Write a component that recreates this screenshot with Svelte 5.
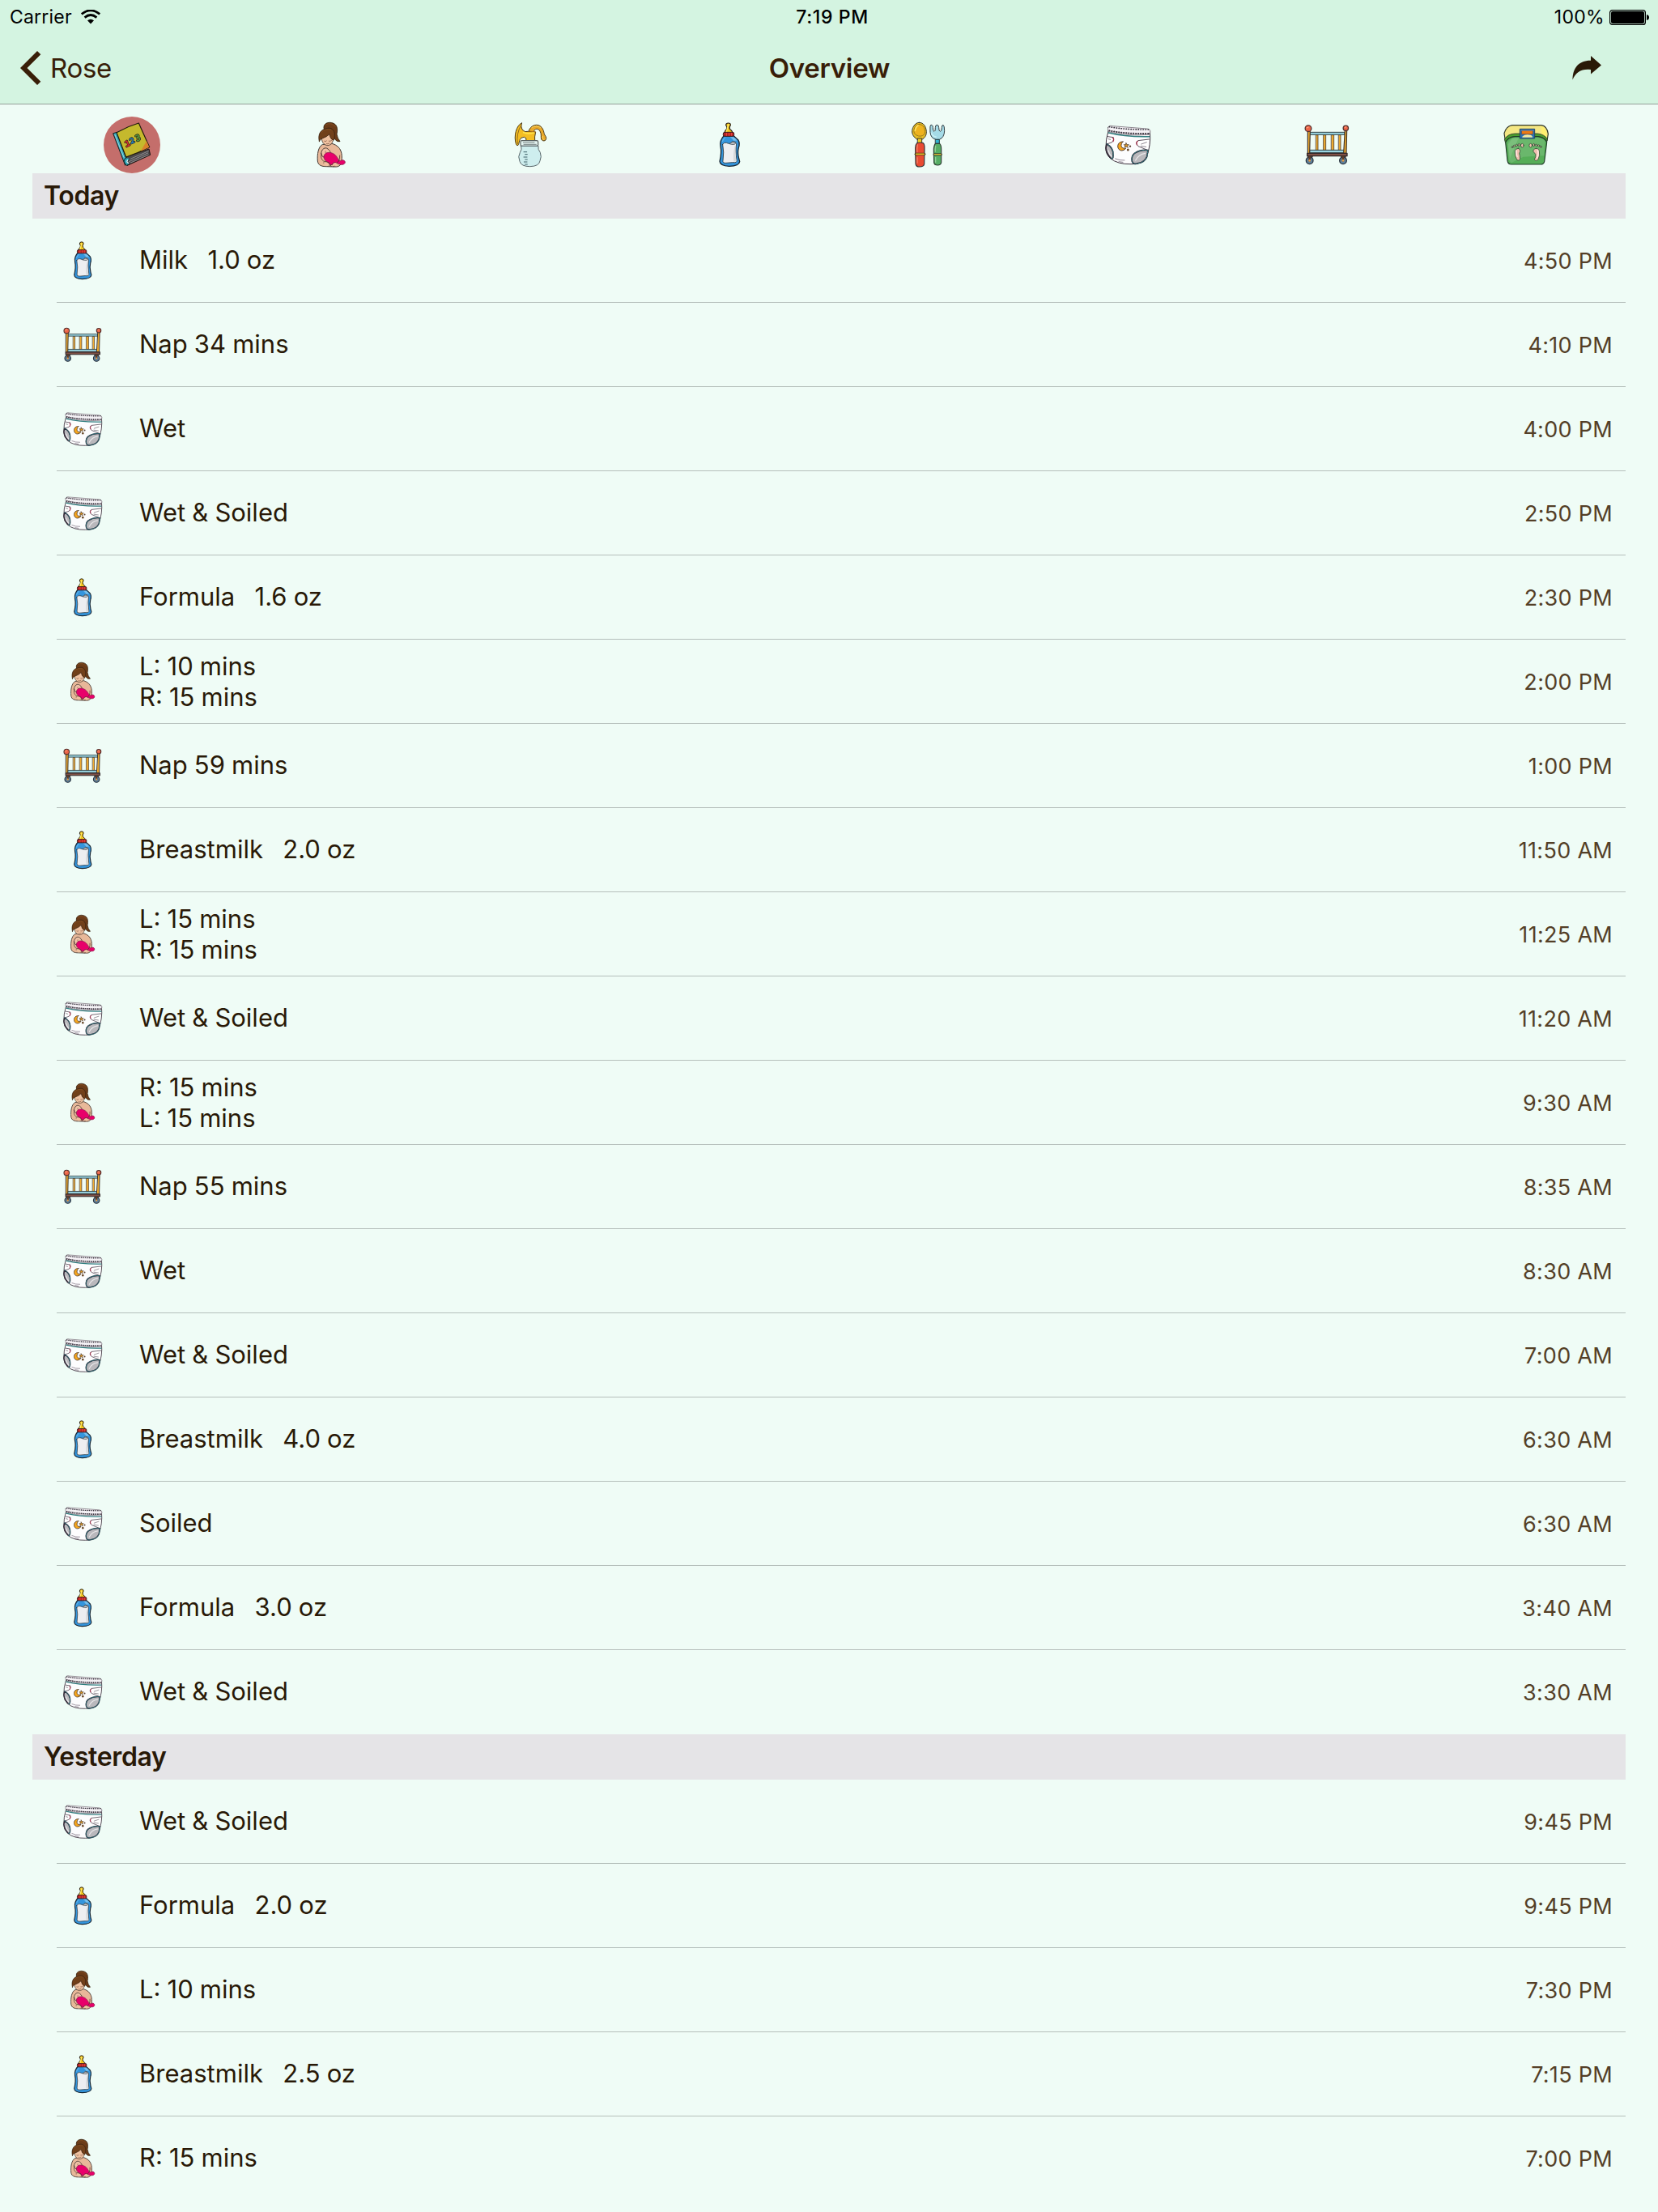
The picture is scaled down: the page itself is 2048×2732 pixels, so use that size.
<script lang="ts">
  type Kind = "log" | "nursing" | "pump" | "bottle" | "food" | "diaper" | "crib" | "bag";
  type Entry = { kind: Kind; text: string; time: string };

  const tabs: Kind[] = ["log", "nursing", "pump", "bottle", "food", "diaper", "crib", "bag"];
  let selected: Kind = $state("log");

  // each icon is drawn in its own 210 unit square
  const boxes: Record<Kind, string> = {
    log: "24 18 210 210",
    nursing: "12 18 210 210",
    pump: "15 18 210 210",
    bottle: "18 18 210 210",
    food: "6 18 210 210",
    diaper: "24 18 210 210",
    crib: "12 18 210 210",
    bag: "15 18 210 210"
  };

  const days: { title: string; entries: Entry[] }[] = [
    {
      title: "Today",
      entries: [
        { kind: "bottle", text: "Milk   1.0 oz", time: "4:50 PM" },
        { kind: "crib", text: "Nap 34 mins", time: "4:10 PM" },
        { kind: "diaper", text: "Wet", time: "4:00 PM" },
        { kind: "diaper", text: "Wet & Soiled", time: "2:50 PM" },
        { kind: "bottle", text: "Formula   1.6 oz", time: "2:30 PM" },
        { kind: "nursing", text: "L: 10 mins\nR: 15 mins", time: "2:00 PM" },
        { kind: "crib", text: "Nap 59 mins", time: "1:00 PM" },
        { kind: "bottle", text: "Breastmilk   2.0 oz", time: "11:50 AM" },
        { kind: "nursing", text: "L: 15 mins\nR: 15 mins", time: "11:25 AM" },
        { kind: "diaper", text: "Wet & Soiled", time: "11:20 AM" },
        { kind: "nursing", text: "R: 15 mins\nL: 15 mins", time: "9:30 AM" },
        { kind: "crib", text: "Nap 55 mins", time: "8:35 AM" },
        { kind: "diaper", text: "Wet", time: "8:30 AM" },
        { kind: "diaper", text: "Wet & Soiled", time: "7:00 AM" },
        { kind: "bottle", text: "Breastmilk   4.0 oz", time: "6:30 AM" },
        { kind: "diaper", text: "Soiled", time: "6:30 AM" },
        { kind: "bottle", text: "Formula   3.0 oz", time: "3:40 AM" },
        { kind: "diaper", text: "Wet & Soiled", time: "3:30 AM" }
      ]
    },
    {
      title: "Yesterday",
      entries: [
        { kind: "diaper", text: "Wet & Soiled", time: "9:45 PM" },
        { kind: "bottle", text: "Formula   2.0 oz", time: "9:45 PM" },
        { kind: "nursing", text: "L: 10 mins", time: "7:30 PM" },
        { kind: "bottle", text: "Breastmilk   2.5 oz", time: "7:15 PM" },
        { kind: "nursing", text: "R: 15 mins", time: "7:00 PM" }
      ]
    }
  ];
</script>

{#snippet icon(kind: Kind)}
  <svg class="icon" viewBox={boxes[kind]} stroke-linejoin="round" stroke-linecap="round" aria-hidden="true">
    {#if kind === "log"}
      <path d="M104 168 L192 138 L197 160 L112 199 Z" fill="#4c494b" stroke="#1d1512" stroke-width="3" />
      <path d="M118 185 L188 153 M116 178 L190 146 M124 189 L190 160" stroke="#99969a" stroke-width="2.5" fill="none" />
      <path d="M60 80 L73 76 L107 170 L104 199 L96 178 Z" fill="#35a5b8" stroke="#15201f" stroke-width="3" />
      <path d="M66 86 L99 169" stroke="#9cdce2" stroke-width="3" fill="none" />
      <path d="M108 171 Q94 178 103 192 L109 199 L119 194 Q106 187 121 174" fill="#2fa6b8" stroke="#162326" stroke-width="3" />
      <path d="M113 179 Q107 187 116 190" stroke="#e8f0f0" stroke-width="4" fill="none" />
      <path d="M72 77 Q113 54 154 42 L194 131 Q150 153 107 168 Z" fill="#c5b92d" stroke="#211a0e" stroke-width="3.5" />
      <path d="M183 108 L193 131 L162 146 Z" fill="#d9822b" />
      <g fill="none" stroke="#28201b" stroke-width="8">
        <path d="M104 113 L110 108 L116 125 M109 129 L121 123" />
        <path d="M121 104 Q126 94 132 101 Q134 107 127 117 L138 112" />
        <path d="M142 90 Q151 82 154 90 L148 97 Q160 94 158 102 Q155 109 148 107" />
      </g>
      <path d="M104 113 L110 108 L116 125 M109 129 L121 123" stroke="#cf302d" stroke-width="4.5" fill="none" />
      <path d="M121 104 Q126 94 132 101 Q134 107 127 117 L138 112" stroke="#287cb0" stroke-width="4.5" fill="none" />
      <path d="M142 90 Q151 82 154 90 L148 97 Q160 94 158 102 Q155 109 148 107" stroke="#579a3b" stroke-width="4.5" fill="none" />
    {:else if kind === "nursing"}
      <path d="M91 65 C84 45 106 34 126 43 C142 50 141 70 138 83 Q140 98 150 110 Q139 113 132 103 L122 85 Z" fill="#6b3b18" stroke="#33200f" stroke-width="2.5" />
      <path d="M84 122 C69 130 65 158 67 183 C69 199 83 203 98 203 L132 204 C148 205 155 196 156 183 C159 156 156 130 124 119 Z" fill="#e8b899" stroke="#41352f" stroke-width="3" />
      <path d="M82 91 C80 112 91 125 105 125 C118 124 126 111 126 93 L110 78 Z" fill="#efc1a0" stroke="#4c3b32" stroke-width="2.5" />
      <path d="M73 110 C67 82 79 66 98 63 C115 55 132 67 130 88 Q131 101 126 106 Q113 101 111 83 Q101 93 84 99 Q75 102 73 110 Z" fill="#71401a" stroke="#382010" stroke-width="2.5" />
      <path d="M96 48 Q119 37 133 56 M80 77 Q97 59 117 67" stroke="#8d5425" stroke-width="2" fill="none" />
      <path d="M92 109 Q97 112 100 108 M109 109 Q114 111 119 106 M100 119 Q105 121 110 117" stroke="#6c4535" stroke-width="2" fill="none" />
      <path d="M80 155 C81 138 95 129 105 138 C113 144 117 152 113 159 L92 170 Q81 166 80 155 Z" fill="#efc2a6" stroke="#493a33" stroke-width="3" />
      <path d="M96 146 Q93 151 98 154" stroke="#79503c" stroke-width="2" fill="none" />
      <path d="M90 166 C92 149 112 147 128 157 C143 168 141 179 151 182 Q165 175 169 186 Q169 197 152 196 L137 190 L127 196 L112 197 C107 185 91 186 90 166 Z" fill="#e8006a" stroke="#8e2150" stroke-width="2.5" />
      <path d="M81 157 Q76 174 89 183 L109 188 L117 202 M89 189 Q105 184 111 200 M119 197 Q128 183 137 191 L126 204 M138 190 Q150 183 149 162" fill="none" stroke="#51362d" stroke-width="2.5" />
      <path d="M91 187 Q106 184 111 198 L101 202 Q91 197 91 187 M121 199 Q127 185 138 191 L139 202 Z" fill="#efc1a0" />
    {:else if kind === "pump"}
      <path d="M114 72 C120 49 149 41 162 58 C173 71 168 80 177 91 C185 106 168 114 161 102 C158 91 163 84 156 72 C149 58 130 64 134 77 Z" fill="#e9a92a" stroke="#4c3a18" stroke-width="3" />
      <path d="M126 58 Q146 47 158 59 M166 91 Q162 98 170 104" stroke="#f7d566" stroke-width="3" fill="none" />
      <path d="M88 42 C68 50 58 91 67 119 Q70 128 75 124 C80 117 77 105 87 97 Q98 90 104 98 L105 108 L137 108 Q135 94 140 75 L112 73 Q100 78 90 66 Q84 54 88 42 Z" fill="#f4be23" stroke="#49391b" stroke-width="3" />
      <path d="M95 77 Q115 84 134 77" fill="none" stroke="#ffe34b" stroke-width="5" />
      <path d="M86 50 Q67 82 73 119" fill="none" stroke="#8c661d" stroke-width="3" />
      <path d="M116 72 L139 75" fill="none" stroke="#b67716" stroke-width="3" />
      <rect x="84" y="107" width="65" height="20" rx="5" fill="#e3f3f0" stroke="#59605f" stroke-width="3.5" />
      <path d="M94 114 H135 M96 121 H142" fill="none" stroke="#606b6c" stroke-width="2.5" />
      <path d="M86 127 L150 127 Q147 139 157 151 Q163 167 156 182 Q153 202 119 203 Q86 203 81 184 Q73 166 82 151 Q91 139 86 127 Z" fill="#ceeeee" stroke="#59666a" stroke-width="3" />
      <path d="M96 149 H107 M101 158 H109 M96 168 H108 M101 177 H109 M97 186 H108 M101 195 H109" stroke="#3e6068" stroke-width="3" />
    {:else if kind === "bottle"}
      <path d="M104 82 Q105 70 113 64 Q116 57 110 50 Q110 42 119 42 Q128 42 127 50 Q121 58 125 65 Q136 72 134 81 Z" fill="#f5c91e" stroke="#292017" stroke-width="3.5" />
      <path d="M119 48 Q114 65 112 75" fill="none" stroke="#ffeb6d" stroke-width="4" />
      <path d="M103 88 H137 Q145 96 155 104 Q163 117 157 133 Q152 152 158 173 L161 185 Q159 201 122 202 Q88 201 87 184 Q95 151 90 128 Q86 107 103 88 Z" fill="#3495dd" stroke="#172531" stroke-width="4" />
      <path d="M108 95 Q99 100 97 110 M128 94 Q136 102 139 107 H149 Q149 99 138 95 Z" fill="#7fc3ee" stroke="#65b6e9" stroke-width="3" />
      <rect x="100" y="76" width="40" height="15" rx="5" fill="#b52323" stroke="#371a1b" stroke-width="3" />
      <path d="M112 79 V88 M122 79 V88 M131 79 V88" stroke="#ee4a43" stroke-width="3" />
      <path d="M98 121 Q103 112 112 115 Q126 123 134 110 Q147 109 149 119 Q145 142 150 179 Q153 190 134 188 L109 190 Q97 190 99 181 Q104 150 98 121 Z" fill="#edeef1" stroke="#293137" stroke-width="2.5" />
      <path d="M124 119 Q133 108 147 116 Q140 126 124 119 Z" fill="#c4c8cd" stroke="#4b555d" stroke-width="2.5" />
      <path d="M143 125 Q135 158 139 185 L149 184 Q142 153 144 125 Z" fill="#d7d9dc" />
    {:else if kind === "food"}
      <path d="M76 40 C58 40 49 63 50 75 C51 91 63 98 69 103 H86 C96 98 104 88 103 73 C101 53 92 40 76 40 Z" fill="#e5bd25" stroke="#3a3930" stroke-width="3" />
      <path d="M77 46 Q61 46 57 66 Q55 81 66 87 Q82 95 94 85 Q101 77 94 58 Q89 47 77 46 Z" fill="#eeb31e" stroke="#8f7214" stroke-width="2.5" />
      <path d="M61 70 Q64 55 72 51" fill="none" stroke="#ffe35d" stroke-width="5" />
      <rect x="71" y="99" width="15" height="17" fill="#f0cd22" stroke="#3d3829" stroke-width="3" />
      <path d="M68 116 Q79 112 91 116 Q97 120 96 137 L95 194 Q93 204 78 204 Q64 204 63 193 L62 134 Q62 122 68 116 Z" fill="#e94b32" stroke="#343536" stroke-width="3.5" />
      <path d="M70 123 Q67 139 69 149 M69 170 V190" stroke="#f38167" stroke-width="4" fill="none" />
      <path d="M64 157 H95" stroke="#443b23" stroke-width="10" />
      <path d="M65 157 H94" stroke="#f2bd22" stroke-width="5" />
      <path d="M117 54 Q118 47 123 49 Q127 51 127 59 Q127 73 132 73 Q137 73 136 59 Q136 49 142 49 Q149 49 149 59 Q149 73 154 73 Q160 73 160 58 Q160 49 165 49 Q170 51 170 71 Q169 96 151 103 H139 Q119 99 117 77 Z" fill="#a5dbe7" stroke="#333c40" stroke-width="3" />
      <path d="M122 79 Q124 90 138 93" fill="none" stroke="#c8f0f6" stroke-width="5" />
      <rect x="137" y="103" width="14" height="15" fill="#31b3d0" stroke="#243c42" stroke-width="3" />
      <path d="M136 118 H152 Q158 123 158 138 V188 Q156 198 145 198 Q132 198 131 188 L130 139 Q131 124 136 118 Z" fill="#55ad64" stroke="#303f35" stroke-width="3.5" />
      <path d="M137 127 Q135 140 136 147 M137 169 V187" stroke="#94cf99" stroke-width="4" fill="none" />
      <path d="M132 158 H157" stroke="#3c422d" stroke-width="9" />
      <path d="M133 158 H156" stroke="#e3c639" stroke-width="4" />
    {:else if kind === "diaper"}
      <path d="M57 72 Q47 103 48 133 Q46 156 65 173 Q91 195 141 194 Q179 196 198 169 Q216 124 211 73 Q137 91 57 72 Z" fill="#fdfdfe" stroke="#3d303d" stroke-width="3" />
      <path d="M56 58 Q60 49 72 53 L201 63 Q215 65 212 77 L207 85 Q119 91 58 74 Q53 66 56 58 Z" fill="#f4f1f5" stroke="#5b4f5b" stroke-width="2" />
      <path d="M61 56 Q121 67 207 66" stroke="#332e38" stroke-width="5" stroke-dasharray="1 8" fill="none" />
      <path d="M61 70 Q121 83 206 81" stroke="#3d3440" stroke-width="6" stroke-dasharray="1 8" fill="none" />
      <path d="M58 78 Q121 94 209 92" stroke="#317f80" stroke-width="4.5" fill="none" />
      <path d="M55 92 L76 95 Q79 105 71 113 L54 119 M208 102 L167 107 Q155 116 168 128 L204 143" fill="#fff" stroke="#403341" stroke-width="2.5" />
      <path d="M73 96 Q80 101 75 110 M166 109 Q158 115 164 123" fill="none" stroke="#a92b48" stroke-width="3.5" />
      <path d="M57 101 L65 103 M179 120 L199 113 M178 127 L197 130" stroke="#544957" stroke-width="2" />
      <path d="M51 119 Q78 134 75 162 Q75 178 66 172 Q50 155 48 135 Z" fill="#b9b8bc" stroke="#322937" stroke-width="5" />
      <path d="M51 119 Q78 134 75 162 Q75 178 66 172" fill="none" stroke="#2d858a" stroke-width="3" stroke-dasharray="4 4" />
      <path d="M204 143 Q177 139 154 154 Q141 165 145 184 Q149 197 168 191 Q191 188 200 167 Z" fill="#b9b8bc" stroke="#332938" stroke-width="5" />
      <path d="M204 143 Q177 139 154 154 Q141 165 145 184 Q149 197 168 191 Q191 188 200 167 Z" fill="none" stroke="#2d858a" stroke-width="3" stroke-dasharray="4 4" />
      <path d="M57 144 Q61 158 69 165 M158 180 Q169 158 194 154" fill="none" stroke="#e7e6e8" stroke-width="4" />
      <path d="M111 111 C87 109 86 143 107 144 Q117 144 122 135 C103 139 100 121 111 111 Z" fill="#f6a51d" stroke="#514036" stroke-width="3" />
      <path d="M123 116 L126 122 L133 122 L128 127 L130 133 L123 129 L118 132 L119 126 L115 122 L121 122 Z" fill="#e69b24" stroke="#544332" stroke-width="2.5" />
      <circle cx="138" cy="128" r="3.5" fill="#5c4435" />
      <circle cx="130" cy="141" r="4.5" fill="#6a4b2e" />
      <path d="M83 174 Q98 181 117 180 M96 185 L111 187" stroke="#7c7180" stroke-width="2.5" fill="none" />
    {:else if kind === "crib"}
      <g fill="#edaa31" stroke="#533d28" stroke-width="2.5">
        <rect x="77" y="86" width="7" height="57" />
        <rect x="105" y="86" width="8" height="57" />
        <rect x="134" y="86" width="9" height="57" />
        <rect x="161" y="86" width="7" height="57" />
      </g>
      <rect x="54" y="76" width="129" height="9" fill="#9ad6e3" stroke="#314044" stroke-width="3" />
      <rect x="54" y="142" width="129" height="10" fill="#9ad6e3" stroke="#314044" stroke-width="3" />
      <path d="M46 72 H55 L53 156 H46 Z M184 66 H191 L189 154 H179 Z" fill="#ecaa2f" stroke="#40332a" stroke-width="3.5" />
      <rect x="44" y="154" width="148" height="10" fill="#815146" stroke="#33292a" stroke-width="4" />
      <path d="M47 166 H64 L58 178 H50 Z M170 166 H187 L182 179 H174 Z" fill="#7c4e35" stroke="#40312a" stroke-width="3" />
      <circle cx="53" cy="181" r="13" fill="#60839e" stroke="#2b343f" stroke-width="4" />
      <circle cx="177" cy="181" r="13" fill="#60839e" stroke="#2b343f" stroke-width="4" />
      <path d="M53 168 V181 M177 168 V181" stroke="#603b26" stroke-width="8" />
      <circle cx="53" cy="181" r="4" fill="#e5a14b" />
      <circle cx="177" cy="181" r="4" fill="#e5a14b" />
      <circle cx="48" cy="62" r="11.5" fill="#ed6548" stroke="#54302d" stroke-width="4" />
      <circle cx="187" cy="61" r="9.5" fill="#ed6548" stroke="#54302d" stroke-width="4" />
      <path d="M43 60 L49 57 M184 58 L188 56" stroke="#ffad8a" stroke-width="3" />
    {:else}
      <path d="M68 50 H177 Q198 53 202 82 L198 108 H43 L39 80 Q46 54 68 50 Z" fill="#f4e783" stroke="#32392b" stroke-width="3.5" />
      <path d="M176 53 Q193 58 197 84 L194 96 Q187 91 178 86 Z" fill="#fff06f" />
      <path d="M41 101 Q52 82 79 81 H163 Q188 84 199 101 L197 110 Q187 94 164 92 H79 Q55 93 44 113 Z" fill="#4b9d2e" stroke="#293b24" stroke-width="2.5" />
      <path d="M44 113 Q53 94 78 92 H165 Q190 96 197 113 L188 184 Q186 195 174 195 H66 Q53 195 51 181 Z" fill="#55ae57" stroke="#203c29" stroke-width="3.5" />
      <path d="M52 114 Q61 99 80 96 H164 Q183 97 190 109 L186 163 L110 167 L66 189 Q57 184 56 175 Z" fill="#76bb78" opacity=".65" />
      <path d="M53 121 L70 98 H92 L60 174 Z" fill="#91ca91" opacity=".45" />
      <rect x="98" y="64" width="54" height="35" fill="#2771b6" stroke="#254363" stroke-width="3" />
      <rect x="105" y="70" width="40" height="13" fill="#ec7b15" stroke="#8d4927" stroke-width="2" />
      <path d="M106 92 Q113 85 125 85 Q139 85 144 92 V95 H106 Z" fill="#f5eba2" />
      <path d="M103 69 H147" stroke="#63a3dc" stroke-width="2" />
      <g stroke="#304f36" stroke-width="2.5" fill="#f0bfaf">
        <path d="M92 136 Q103 142 95 154 Q98 164 98 175 Q94 185 86 178 Q78 165 79 149 Q79 137 92 136 Z" />
        <path d="M157 136 Q145 138 147 148 L155 157 Q158 166 151 177 Q158 186 165 176 Q173 161 169 145 Q168 136 157 136 Z" />
        <ellipse cx="106" cy="125" rx="5.5" ry="7" />
        <ellipse cx="137" cy="125" rx="5.5" ry="7" />
        <ellipse cx="94" cy="123" rx="3.5" ry="5" />
        <ellipse cx="149" cy="123" rx="3.5" ry="5" />
        <circle cx="85" cy="124" r="3.5" />
        <circle cx="158" cy="124" r="3.5" />
        <circle cx="76" cy="127" r="3.5" />
        <circle cx="167" cy="126" r="3.5" />
        <circle cx="69" cy="131" r="3" />
        <circle cx="175" cy="130" r="3" />
      </g>
      <path d="M84 144 Q82 158 87 166 M163 142 Q168 157 161 171" fill="none" stroke="#ffe9e1" stroke-width="5" />
    {/if}
  </svg>
{/snippet}

<div class="screen">
  <header class="top">
    <div class="status">
      <div class="carrier">
        <span>Carrier</span>
        <svg class="wifi" viewBox="0 0 24 18" aria-hidden="true">
          <path d="M0.8 5.5 Q12 -3.8 23.2 5.5" />
          <path d="M4.6 9.6 Q12 3.5 19.4 9.6" />
          <path class="dot" d="M8 13.3 Q12 10 16 13.3 L12 17.6 Z" />
        </svg>
      </div>
      <span class="clock">7:19 PM</span>
      <div class="power">
        <span>100%</span>
        <svg class="battery" viewBox="0 0 49 19" aria-hidden="true">
          <rect x=".6" y=".6" width="43.8" height="17.8" rx="3" fill="none" stroke="#000" stroke-width="1.2" />
          <rect x="2" y="2" width="41" height="15" rx="2" />
          <path d="M46 6 Q49 6.5 49 9.5 Q49 12.5 46 13 Z" />
        </svg>
      </div>
    </div>
    <nav class="bar">
      <button class="back" type="button">
        <svg class="chevron" viewBox="0 0 26 42" aria-hidden="true">
          <path d="M21 0 L25.3 4.2 L8.5 21 L25.3 37.8 L21 42 L0 21 Z" />
        </svg>
        <span>Rose</span>
      </button>
      <h1>Overview</h1>
      <button class="share" type="button" aria-label="Share">
        <svg viewBox="0 0 36 30" aria-hidden="true">
          <path d="M23 0 L36 11.4 L23 22.5 V17 C12 15.5 4.5 20 0.5 29.5 C0.5 15 8 5.5 23 5.7 Z" />
        </svg>
      </button>
    </nav>
  </header>

  <main>
    <div class="tabs">
      {#each tabs as tab}
        <button type="button" class:active={selected === tab} aria-label={tab} onclick={() => (selected = tab)}>
          {@render icon(tab)}
        </button>
      {/each}
    </div>

    {#each days as day}
      <section>
        <h2>{day.title}</h2>
        <ul>
          {#each day.entries as entry}
            <li>
              {@render icon(entry.kind)}
              <span class="text" class:double={entry.text.includes("\n")}>{entry.text}</span>
              <time>{entry.time}</time>
            </li>
          {/each}
        </ul>
      </section>
    {/each}
  </main>
</div>

<style>
  :global(body) { background: #effcf6; }

  .screen {
    height: 2732px;
    overflow: hidden;
    background: #effcf6;
    color: #291907;
    font-family: Inter, "Liberation Sans", sans-serif;
  }

  button { border: 0; padding: 0; background: none; font: inherit; color: inherit; cursor: pointer; }

  .top {
    box-sizing: border-box;
    height: 129px;
    background: #d4f4e1;
    border-bottom: 1px solid #949f99;
  }

  .status {
    box-sizing: border-box;
    height: 41px;
    padding: 1px 11px 0 12px;
    display: grid;
    grid-template-columns: 1fr auto 1fr;
    align-items: center;
    font-size: 23px;
    color: #000;
  }
  .carrier, .power { display: flex; align-items: center; }
  .carrier { gap: 11px; letter-spacing: 0.2px; }
  .power { justify-content: flex-end; gap: 6px; letter-spacing: 0.3px; }
  .clock { font-weight: 500; padding-left: 7px; letter-spacing: 0.6px; }
  .wifi { width: 24px; height: 18px; fill: none; stroke: #000; stroke-width: 2.8; }
  .wifi .dot { fill: #000; stroke: none; }
  .battery { width: 49px; height: 19px; }

  .bar {
    height: 86px;
    padding: 0 70px 0 25px;
    display: grid;
    grid-template-columns: 1fr auto 1fr;
    align-items: center;
    font-size: 33px;
    color: #381e08;
  }
  .back { display: flex; align-items: center; gap: 11px; letter-spacing: -0.3px; }
  .chevron { width: 26px; height: 42px; fill: #381e08; }
  h1 { margin: 0 0 0 46px; font-size: 33px; font-weight: 600; letter-spacing: -0.3px; }
  .share { justify-self: end; }
  .share svg { display: block; width: 36px; height: 30px; fill: #291907; }

  main { padding: 15px 40px 0; }

  .tabs { display: grid; grid-template-columns: repeat(8, 1fr); justify-items: center; }
  .tabs button { width: 70px; height: 70px; border-radius: 50%; }
  .tabs .active { background: #c46e6b; }
  .tabs .icon { display: block; width: 70px; height: 70px; }

  h2 {
    margin: 0;
    height: 56px;
    padding-left: 14px;
    line-height: 56px;
    font-size: 32px;
    font-weight: 600;
    letter-spacing: -0.35px;
    background: #e5e4e7;
  }

  ul { margin: 0 0 0 30px; padding: 0; list-style: none; }
  li {
    box-sizing: border-box;
    height: 104px;
    padding: 0 16px 0 2px;
    display: flex;
    align-items: center;
    border-bottom: 1px solid #b5bfbb;
  }
  li:last-child { border-bottom-color: transparent; }
  li .icon { flex: none; width: 60px; height: 60px; }

  .text {
    flex: 1;
    margin-left: 40px;
    padding-bottom: 2px;
    font-size: 31px;
    line-height: 38px;
    white-space: pre;
    word-spacing: -0.6px;
  }
  .text.double { padding-bottom: 0; }
  time { padding-top: 2px; font-size: 27px; letter-spacing: 0.3px; color: #543f27; }
</style>
